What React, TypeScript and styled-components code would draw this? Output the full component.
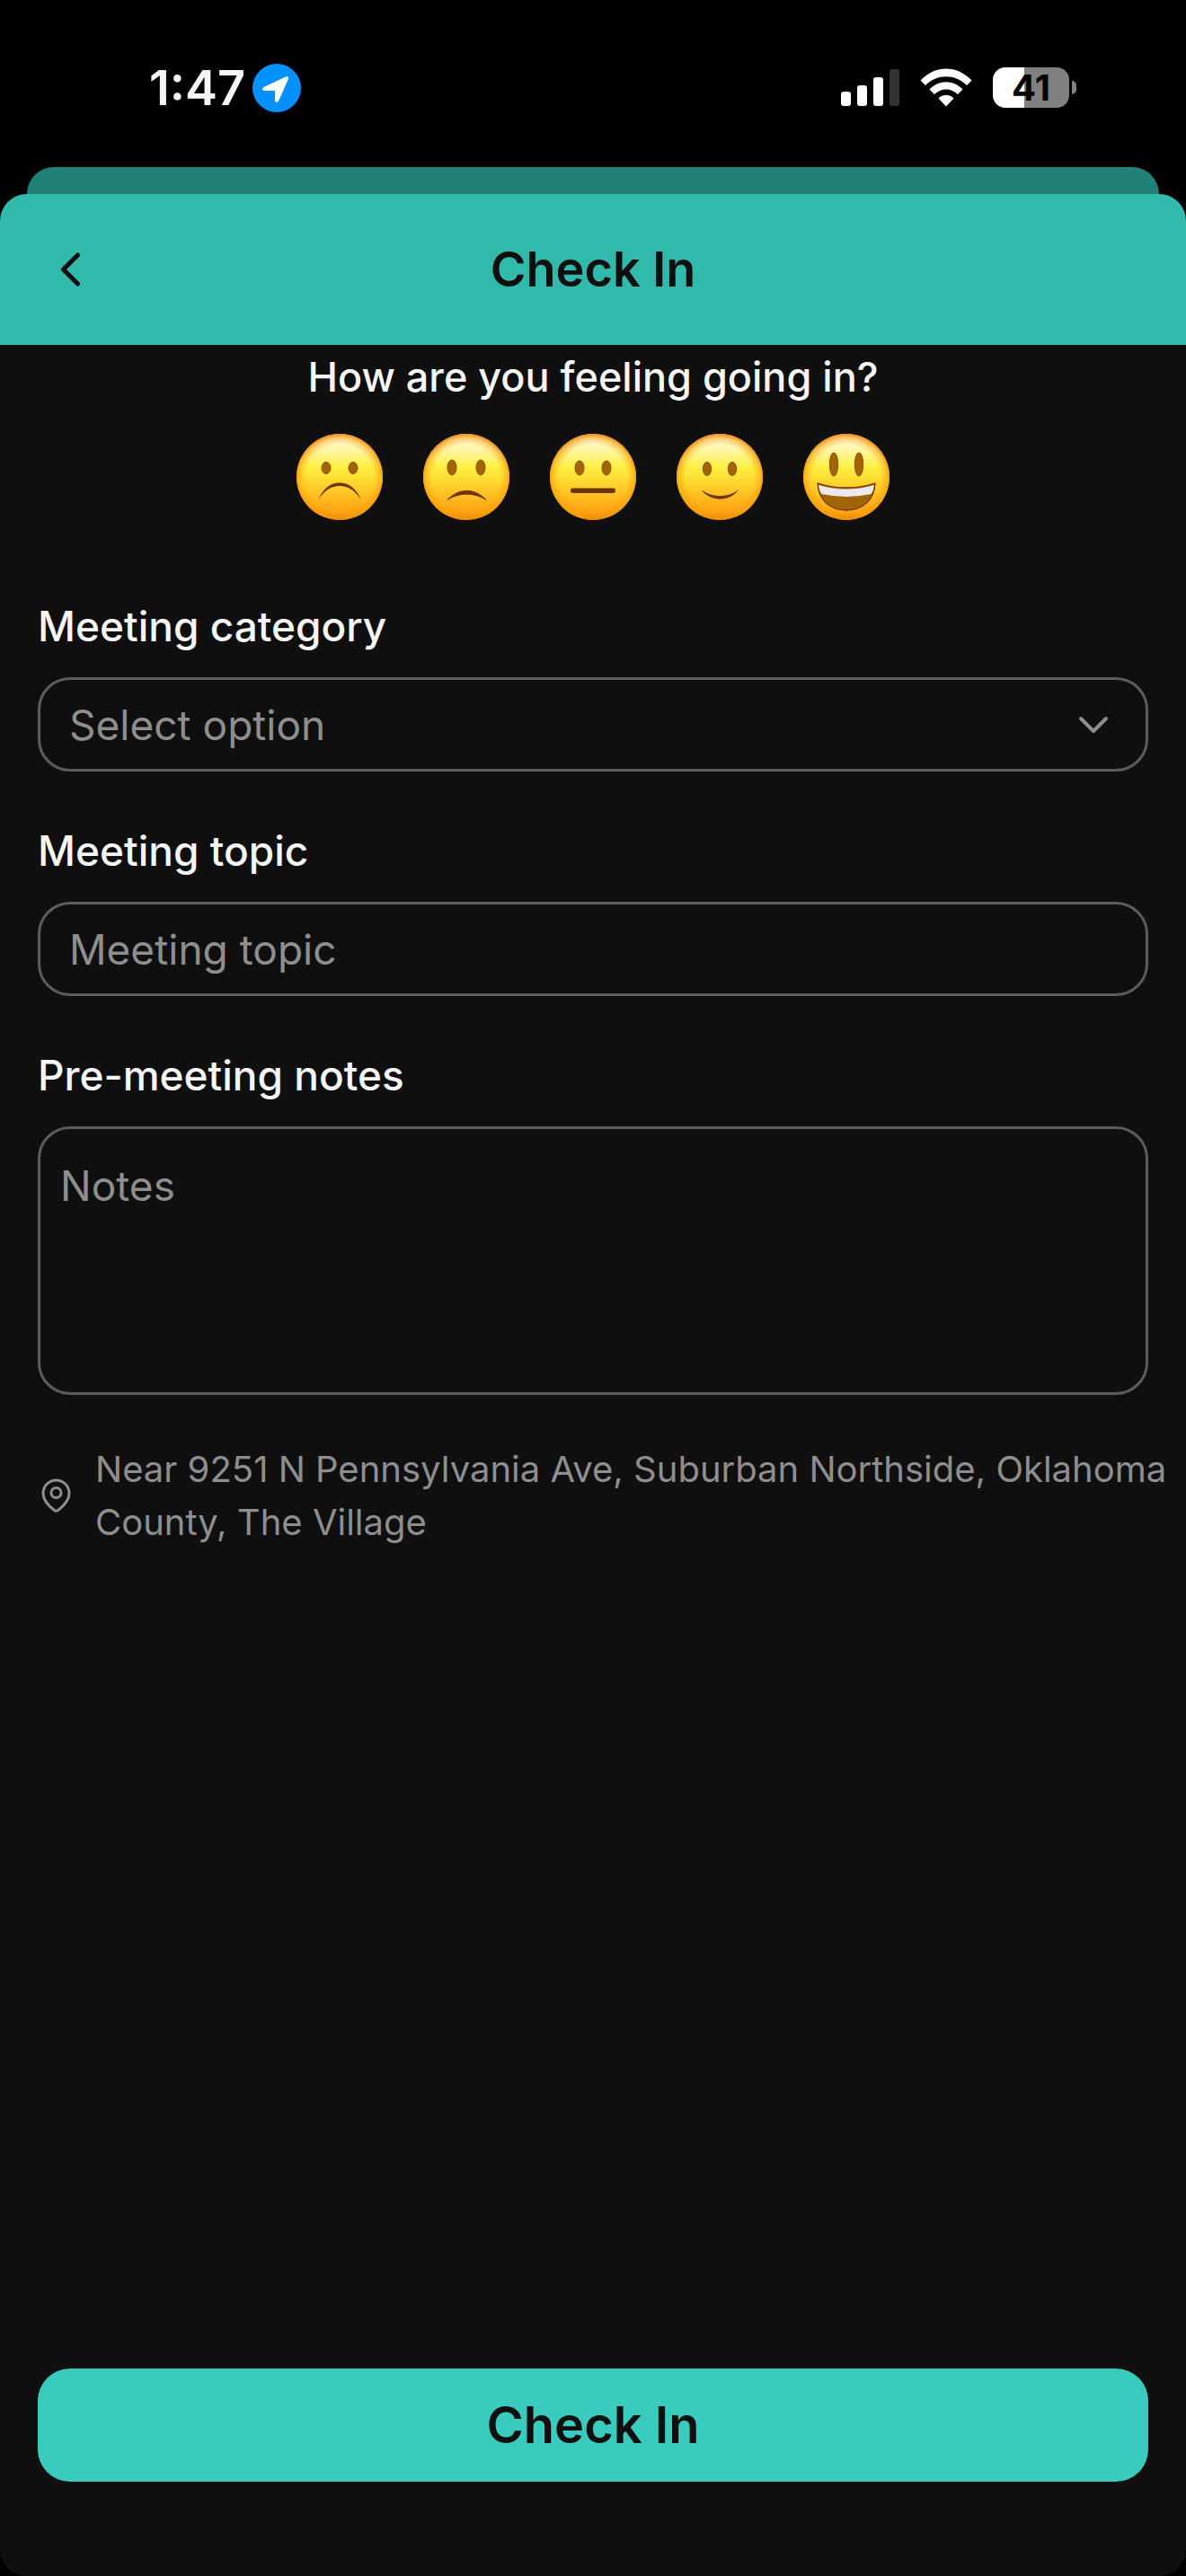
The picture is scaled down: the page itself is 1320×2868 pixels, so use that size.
import React, { useState } from 'react';
import styled, { createGlobalStyle } from 'styled-components';

const color = {
  surface: '#0f0f0f',
  header: '#31b9ac',
  headerBehind: '#228176',
  accent: '#39ccbe',
  text: '#f5f5f5',
  muted: '#8e8e8e',
  border: '#5c5c5c',
};

const GlobalStyle = createGlobalStyle`
  *, *::before, *::after { box-sizing: border-box; }
  body {
    margin: 0;
    background: #000;
    color: ${color.text};
    font-family: Inter, "Liberation Sans", sans-serif;
  }
  button, input, select, textarea { font: inherit; }
`;

const Screen = styled.div`
  display: flex;
  flex-direction: column;
  min-height: 100vh;
  background: #000;
`;

const StatusBar = styled.div`
  display: flex;
  align-items: center;
  justify-content: space-between;
  height: 186px;
  padding: 9px 122px 0 166px;
`;

const StatusGroup = styled.div<{ $gap: number }>`
  display: flex;
  align-items: center;
  gap: ${(p) => p.$gap}px;
`;

const Clock = styled.span`
  font-size: 54px;
  line-height: 68px;
  font-weight: 600;
`;

const Battery = styled.div`
  display: flex;
  align-items: center;
  gap: 3px;
`;

const BatteryBody = styled.div<{ $level: number }>`
  display: flex;
  align-items: center;
  justify-content: center;
  width: 85px;
  height: 45px;
  border-radius: 14px;
  background: linear-gradient(
    to right,
    #fff ${(p) => p.$level}%,
    #808080 ${(p) => p.$level}%
  );
  color: #000;
  font-size: 40px;
  line-height: 45px;
  font-weight: 700;
`;

const BatteryTip = styled.div`
  width: 5px;
  height: 15px;
  border-radius: 0 8px 8px 0;
  background: #808080;
`;

const SheetBehind = styled.div`
  height: 30px;
  margin: 0 30px;
  border-radius: 30px 30px 0 0;
  background: ${color.headerBehind};
`;

const Sheet = styled.main`
  display: flex;
  flex: 1;
  flex-direction: column;
  overflow: hidden;
  border-radius: 30px;
  background: ${color.surface};
`;

const Header = styled.header`
  display: grid;
  grid-template-columns: 96px 1fr 96px;
  align-items: center;
  height: 168px;
  padding: 0 30px;
  background: ${color.header};
  color: ${color.surface};
`;

const BackButton = styled.button`
  display: flex;
  align-items: center;
  justify-content: center;
  width: 96px;
  height: 96px;
  padding: 0;
  border: 0;
  background: none;
  color: inherit;
`;

const Title = styled.h1`
  margin: 0;
  font-size: 54px;
  line-height: 68px;
  font-weight: 600;
  text-align: center;
`;

const Form = styled.form`
  display: flex;
  flex: 1;
  flex-direction: column;
  padding: 0 42px 105px;
`;

const MoodGroup = styled.section`
  display: flex;
  flex-direction: column;
  align-items: center;
  gap: 33px;
  padding: 6px 0 88px;
`;

const Question = styled.h2`
  margin: 0;
  font-size: 45px;
  line-height: 60px;
  font-weight: 500;
`;

const MoodRow = styled.div`
  display: flex;
  gap: 45px;
`;

const MoodButton = styled.button`
  display: flex;
  padding: 0;
  border: 0;
  border-radius: 50%;
  background: none;
`;

const Fields = styled.div`
  display: flex;
  flex-direction: column;
  gap: 58px;
`;

const Field = styled.div`
  display: flex;
  flex-direction: column;
  gap: 27px;
`;

const Label = styled.label`
  font-size: 46px;
  line-height: 60px;
  font-weight: 500;
`;

const controlStyles = `
  width: 100%;
  margin: 0;
  border: 3px solid ${color.border};
  border-radius: 36px;
  outline: 0;
  appearance: none;
  background: ${color.surface};
  color: ${color.text};
  font-size: 46px;
  line-height: 60px;

  &::placeholder { color: ${color.muted}; opacity: 1; }
`;

const TextInput = styled.input`
  ${controlStyles}
  height: 105px;
  padding: 0 32px;
`;

const SelectWrap = styled.div`
  position: relative;
  display: flex;
`;

const Select = styled.select<{ $empty: boolean }>`
  ${controlStyles}
  height: 105px;
  padding: 0 108px 0 32px;
  color: ${(p) => (p.$empty ? color.muted : color.text)};
`;

const SelectArrow = styled.svg`
  position: absolute;
  top: 50%;
  right: 43px;
  transform: translateY(-50%);
  pointer-events: none;
`;

const TextArea = styled.textarea`
  ${controlStyles}
  display: block;
  height: 299px;
  padding: 33px 22px;
  resize: none;
`;

const Location = styled.div`
  display: flex;
  align-items: center;
  gap: 26px;
  margin: 53px -24px 53px 0;
  color: ${color.muted};
  font-size: 40px;
  line-height: 59px;

  svg { flex: none; }
`;

const Address = styled.p`
  margin: 0;
`;

const SubmitButton = styled.button`
  height: 126px;
  margin-top: auto;
  border: 0;
  border-radius: 36px;
  background: ${color.accent};
  color: ${color.surface};
  font-size: 56px;
  line-height: 68px;
  font-weight: 600;
`;

const LocationBadge = () => (
  <svg width="54" height="54" viewBox="0 0 54 54" aria-hidden="true">
    <circle cx="27" cy="27" r="27" fill="#0391ff" />
    <path
      d="M12.500 26 37 14.500q3.800-1 2.800 2.800L29 41.500q-2.500 3-4-.5V30H12.800q-3.600-1.500-.3-4Z"
      fill="#fff"
    />
  </svg>
);

const SignalIcon = () => (
  <svg width="65" height="43" viewBox="0 0 65 43" aria-hidden="true">
    <rect x="0" y="26" width="11" height="16" rx="3" fill="#fff" />
    <rect x="18" y="19" width="11" height="23" rx="3" fill="#fff" />
    <rect x="36" y="10" width="11" height="32" rx="3" fill="#fff" />
    <rect x="54" y="1" width="11" height="41" rx="3" fill="#333" />
  </svg>
);

const WifiIcon = () => (
  <svg width="58" height="43" viewBox="0 0 58 43" fill="#fff" aria-hidden="true">
    <path d="M0.500 13.500C16.500-4 41.500-4 57.500 13.500L52 19C39 6 19 6 6 19Z" />
    <path d="M10.500 23.500C21 12.500 37 12.500 47.500 23.500L42 29C34.500 21.500 23.500 21.500 16 29Z" />
    <path d="M20.500 33.500C25 28.500 33 28.500 37.500 33.500L29 42.500Z" />
  </svg>
);

const FACE_INK = '#6e3500';

const moods = [
  {
    name: 'Very bad',
    eyes: { left: 33, right: 63, y: 38, rx: 5.5, ry: 7 },
    mouth: (
      <path
        d="M24.500 73C30 60 38 54.500 48 54.500S66 60 71.700 73C65 63 57 58 48 58S31 63 24.500 73Z"
        fill={FACE_INK}
      />
    ),
  },
  {
    name: 'Bad',
    eyes: { left: 32, right: 64, y: 37.5, rx: 5.5, ry: 9 },
    mouth: (
      <path
        d="M27 73.500C40 60 57 60 70 73.500C57 65 40 65 27 73.500Z"
        fill={FACE_INK}
        stroke={FACE_INK}
        strokeLinejoin="round"
      />
    ),
  },
  {
    name: 'Neutral',
    eyes: { left: 33, right: 63, y: 38, rx: 5.5, ry: 8.5 },
    mouth: <rect x="23" y="60.500" width="50" height="5.500" rx="2.700" fill={FACE_INK} />,
  },
  {
    name: 'Good',
    eyes: { left: 34, right: 62, y: 39, rx: 5.2, ry: 8 },
    mouth: (
      <path
        d="M29 63.500C39 75 58 75 67.500 63.500C58 71.500 39 71.500 29 63.500Z"
        fill={FACE_INK}
        stroke={FACE_INK}
        strokeLinejoin="round"
      />
    ),
  },
  {
    name: 'Very good',
    eyes: { left: 34, right: 62, y: 34, rx: 5.2, ry: 13.5 },
    mouth: (
      <>
        <path
          d="M16 55Q48 65 80 55C79 74 66 85 48 85S17 74 16 55Z"
          fill="#a36406"
          stroke={FACE_INK}
          strokeWidth="1.300"
          strokeLinejoin="round"
        />
        <path d="M17 57Q48 66 79 57Q78.500 63 75.500 67Q48 73 20.500 67Q17.500 63 17 57Z" fill="#e9e9ee" />
      </>
    ),
  },
];

const FaceGradients = () => (
  <svg width="0" height="0" display="block" aria-hidden="true">
    <defs>
      <linearGradient id="faceBody" x1="0" y1="0" x2="0" y2="1">
        <stop offset="0.050" stopColor="#fffbd8" />
        <stop offset="0.200" stopColor="#fff6a0" />
        <stop offset="0.380" stopColor="#fff046" />
        <stop offset="0.550" stopColor="#ffd92f" />
        <stop offset="0.750" stopColor="#ffb91f" />
        <stop offset="0.920" stopColor="#fba112" />
        <stop offset="1" stopColor="#dd860a" />
      </linearGradient>
      <radialGradient id="faceRim" cx="0.500" cy="0.520" r="0.520">
        <stop offset="0.760" stopColor="#f98f00" stopOpacity="0" />
        <stop offset="0.900" stopColor="#fb9a05" stopOpacity="0.450" />
        <stop offset="1" stopColor="#ee7f00" stopOpacity="0.950" />
      </radialGradient>
    </defs>
  </svg>
);

type Mood = (typeof moods)[number];

const Face = ({ mood }: { mood: Mood }) => (
  <svg width="96" height="96" viewBox="0 0 96 96" aria-hidden="true">
    <circle cx="48" cy="48" r="48" fill="url(#faceBody)" />
    <circle cx="48" cy="48" r="48" fill="url(#faceRim)" />
    {[mood.eyes.left, mood.eyes.right].map((x) => (
      <ellipse
        key={x}
        cx={x}
        cy={mood.eyes.y}
        rx={mood.eyes.rx - 0.5}
        ry={mood.eyes.ry - 0.5}
        fill="#a36406"
        stroke="#8a4f04"
      />
    ))}
    {mood.mouth}
  </svg>
);

export default function App() {
  const [mood, setMood] = useState<string | null>(null);
  const [category, setCategory] = useState('');

  return (
    <>
      <GlobalStyle />
      <FaceGradients />
      <Screen>
        <StatusBar>
          <StatusGroup $gap={8}>
            <Clock>1:47</Clock>
            <LocationBadge />
          </StatusGroup>
          <StatusGroup $gap={23}>
            <SignalIcon />
            <WifiIcon />
            <Battery>
              <BatteryBody $level={41}>41</BatteryBody>
              <BatteryTip />
            </Battery>
          </StatusGroup>
        </StatusBar>
        <SheetBehind />
        <Sheet>
          <Header>
            <BackButton type="button" aria-label="Back">
              <svg width="24" height="38" viewBox="0 0 24 38" fill="none" aria-hidden="true">
                <path
                  d="M20.500 3 4.500 19l16 16"
                  stroke="currentColor"
                  strokeWidth="5"
                  strokeLinecap="round"
                  strokeLinejoin="round"
                />
              </svg>
            </BackButton>
            <Title>Check In</Title>
          </Header>
          <Form onSubmit={(e) => e.preventDefault()}>
            <MoodGroup>
              <Question>How are you feeling going in?</Question>
              <MoodRow>
                {moods.map((m) => (
                  <MoodButton
                    key={m.name}
                    type="button"
                    aria-label={m.name}
                    aria-pressed={mood === m.name}
                    onClick={() => setMood(m.name)}
                  >
                    <Face mood={m} />
                  </MoodButton>
                ))}
              </MoodRow>
            </MoodGroup>
            <Fields>
              <Field>
                <Label htmlFor="category">Meeting category</Label>
                <SelectWrap>
                  <Select
                    id="category"
                    $empty={category === ''}
                    value={category}
                    onChange={(e) => setCategory(e.target.value)}
                  >
                    <option value="">Select option</option>
                  </Select>
                  <SelectArrow width="36" height="24" viewBox="0 0 36 24" fill="none" aria-hidden="true">
                    <path
                      d="M4 5l14 14L32 5"
                      stroke={color.muted}
                      strokeWidth="4"
                      strokeLinecap="round"
                      strokeLinejoin="round"
                    />
                  </SelectArrow>
                </SelectWrap>
              </Field>
              <Field>
                <Label htmlFor="topic">Meeting topic</Label>
                <TextInput id="topic" type="text" placeholder="Meeting topic" />
              </Field>
              <Field>
                <Label htmlFor="notes">Pre-meeting notes</Label>
                <TextArea id="notes" placeholder="Notes" />
              </Field>
            </Fields>
            <Location>
              <svg
                width="38"
                height="40"
                viewBox="0 0 38 40"
                fill="none"
                stroke="currentColor"
                strokeWidth="3"
                aria-hidden="true"
              >
                <path
                  d="M22.500 36.500C31 30 35 24 35 17.500A14.500 14.500 0 0 0 6 17.500C6 24 10 30 18.500 36.500Q20.500 38 22.500 36.500Z"
                  strokeLinejoin="round"
                />
                <circle cx="20.500" cy="17" r="5.500" />
              </svg>
              <Address>
                Near 9251 N Pennsylvania Ave, Suburban Northside, Oklahoma County, The Village
              </Address>
            </Location>
            <SubmitButton type="submit">Check In</SubmitButton>
          </Form>
        </Sheet>
      </Screen>
    </>
  );
}
